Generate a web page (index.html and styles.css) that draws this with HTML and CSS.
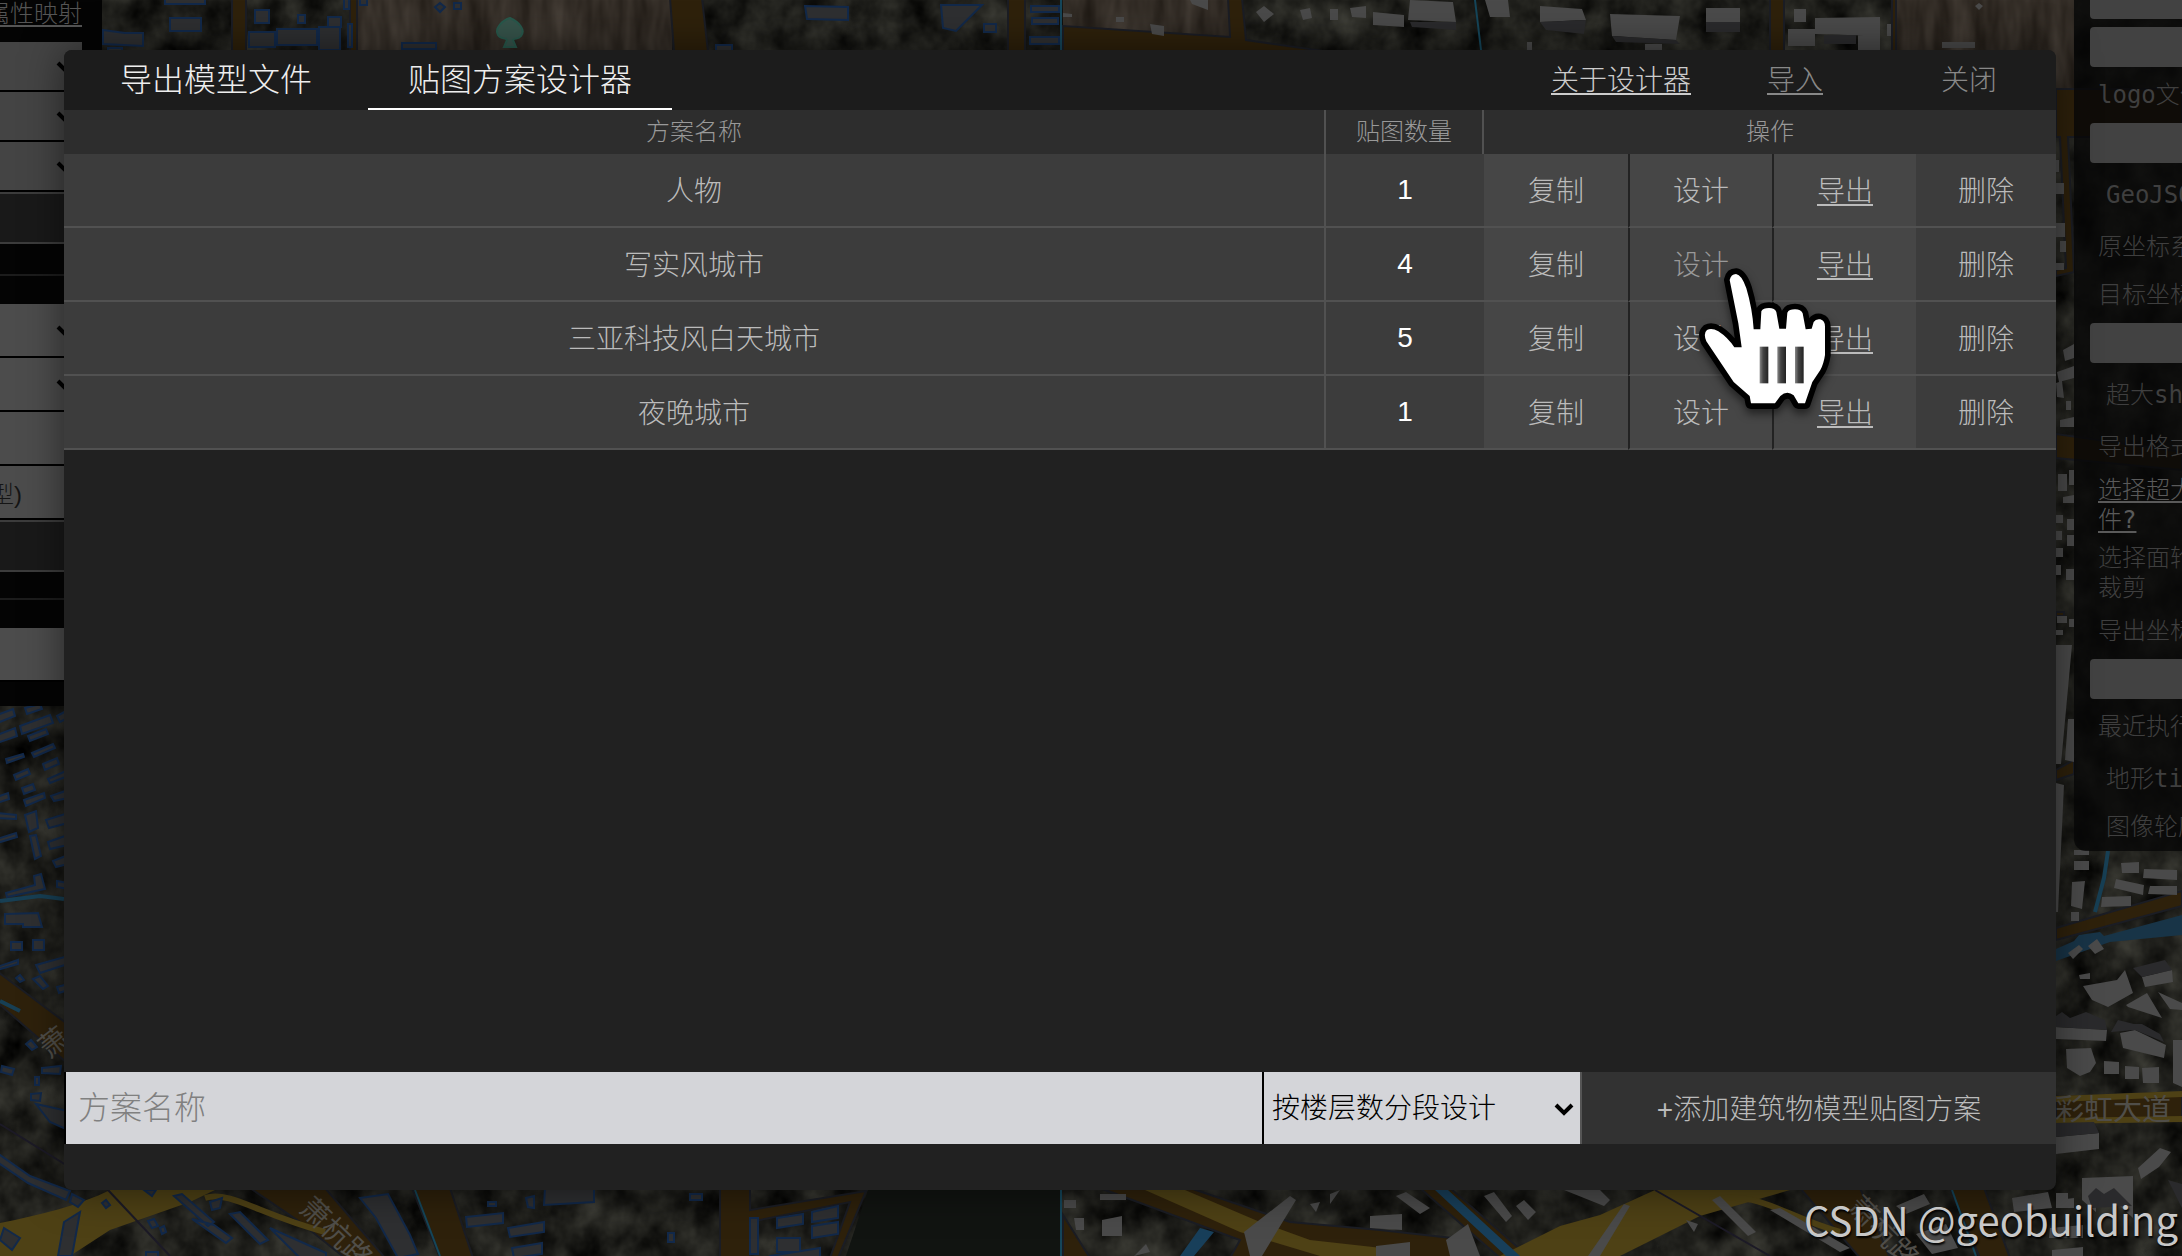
FILE: index.html
```html
<!DOCTYPE html>
<html lang="zh-CN">
<head>
    <meta charset="UTF-8">
    <meta name="viewport" content="width=device-width, initial-scale=1.0">
    <title>贴图方案设计器</title>
    <link rel="stylesheet" href="styles.css">
</head>
<body>

    <!-- Map behind everything -->
    <svg class="map" viewBox="0 0 2182 1256" preserveAspectRatio="xMidYMid slice" aria-hidden="true">
        <defs>
            <filter id="ground" x="0" y="0" width="100%" height="100%" color-interpolation-filters="sRGB">
                <feTurbulence type="fractalNoise" baseFrequency="0.03 0.026" numOctaves="4" seed="8"/>
                <feColorMatrix values="0.3 0 0 0 -0.03  0.3 0 0 0 -0.03  0.27 0 0 0 -0.03  0 0 0 0 1"/>
            </filter>
            <filter id="soil" x="0" y="0" width="100%" height="100%" color-interpolation-filters="sRGB">
                <feTurbulence type="fractalNoise" baseFrequency="0.06 0.015" numOctaves="3" seed="3"/>
                <feColorMatrix values="0.2 0 0 0 0.1  0.19 0 0 0 0.08  0.18 0 0 0 0.06  0 0 0 0 1"/>
            </filter>
        </defs>
        <rect width="2182" height="1256" fill="#1c1d19"/>
        <rect width="2182" height="1256" filter="url(#ground)"/>
        <rect x="358" width="314" height="50" filter="url(#soil)"/>
        <rect x="1063" width="170" height="50" filter="url(#soil)"/>
        <rect x="1897" width="177" height="89" filter="url(#soil)"/>
        <path d="M868 1190H1060V1256H846Z" fill="#111411"/>

        <!-- roads -->
        <g fill="#2e210b" stroke="#1b1d24" stroke-width="2">
            <path d="M232 -2H246V52H232ZM350 -2H357V52H350ZM670 -2H702L708 52H674ZM1008 -2H1025V52H1008Z"/>
            <path d="M1228 -2H1242L1246 40L1330 52H1063V26L1230 37Z"/>
            <path d="M1770 -2H1784V52H1770ZM1892 -2H1896V52H1892Z"/>
            <path d="M2056 89H2182V137H2090L2068 137L2074 272L2056 276V270L2066 268L2060 137H2056Z"/>
            <path d="M2056 434L2182 452V470L2056 458ZM2056 612H2064V616H2056ZM2056 770L2074 760V774L2056 780Z"/>
            <path d="M-2 972L66 1023V1062L-2 1003Z"/>
            <path d="M250 1188H325L385 1258H345L300 1222ZM412 1188H450L473 1258H440ZM720 1188H750V1210L866 1191L838 1258H830L850 1202L750 1222V1258H720Z"/>
            <path d="M1063 1215L1090 1258H1063ZM1100 1188H1190L1290 1222L1380 1230L1470 1240V1258H1230L1240 1240ZM1420 1188H1450L1530 1258H1500ZM1800 1188H1860L1890 1258H1860ZM1950 1188H1984L2010 1258H1980Z"/>
            <path d="M2056 928L2182 891V906L2056 940Z"/>
            <path d="M2056 1097L2182 1092V1121L2056 1123Z"/>
        </g>
        <g fill="#4e4115">
            <path d="M0 1223C40 1215 80 1205 110 1190H215L190 1202L110 1230L70 1256H0Z"/>
            <path d="M1145 1190H1185L1260 1222L1310 1240L1400 1250V1256H1320L1240 1232Z"/>
            <path d="M1655 1190H1790L1700 1216L1620 1256H1500L1560 1226L1600 1215Z"/>
        </g>
        <path d="M205 1198C230 1190 260 1215 325 1232M1710 1200C1760 1190 1780 1215 1840 1232M2056 1099L2182 1094M2056 1121L2182 1119" fill="none" stroke="#4e4115" stroke-width="6"/>
        <!-- water -->
        <path d="M2056 949L2074 941L2079 935L2100 932L2104 936L2182 915V935L2110 942L2056 961Z" fill="#183447"/>
        <path d="M1180 1256L1200 1228L1214 1232L1194 1256ZM1435 1190H1448L1520 1256H1506Z" fill="#183f5a"/>
        <path d="M0 901L40 896L64 899M0 1001L20 1011M2108 851L2104 878L2095 912" fill="none" stroke="#173f54" stroke-width="4"/>
        <path d="M1061 0V50M1061 1190V1256M415 1190L440 1256M1475 0L1481 50M1952 1190L1976 1256" fill="none" stroke="#15465a" stroke-width="2"/>
        <path d="M0 1124L66 1165M108 1190L170 1256M1655 1190L1770 1256" fill="none" stroke="#1c1a26" stroke-width="2"/>

        <!-- footprints with blue outlines -->
        <g fill="#2e2f31" stroke="#12294a" stroke-width="2">
            <path d="M165 -4H205V4H165ZM170 18H201V31H170ZM103 30L125 33H143V46L103 44ZM108 48H122V52H108ZM255 10H269V23H255ZM298 15H305V23H298ZM328 17H341V27H328ZM249 32H275V47H249ZM277 29H317V45H277ZM319 27H340V50H319ZM348 24H352V47H348ZM344 -2H349V9H344ZM360 -2H367V5H360ZM402 43H436V49H402ZM435 7L440 3L445 7L440 12ZM454 3H461V9H454Z"/>
            <path d="M805 6L848 7V20L807 19ZM716 45H732V52H716ZM941 5H982L956 31L943 28ZM984 24H996V32H984ZM1031 6H1059V12H1031ZM1032 18H1058V24H1032ZM1030 37H1059V44H1030Z"/>
            <path d="M-3 715L13 709L15 716L-3 723ZM25 708L40 704L42 709L27 714ZM-3 735L15 728L17 736L-3 743ZM20 726L50 715L53 723L22 734ZM28 736L46 729L48 734L30 741ZM57 716L68 710V718L60 722ZM6 759L23 754L24 757L7 763ZM32 753L53 744L55 748L34 757ZM43 764L57 758L59 764L45 770ZM48 779L68 770V776L50 783ZM14 775L28 769L30 774L16 780ZM22 788L33 784L35 790L24 794ZM24 800L44 793L45 798L26 806ZM51 796L68 790V798L54 801ZM-3 797L8 793L9 799L-3 803ZM-3 813L16 815V819L-3 818ZM-3 839L16 833L17 837L-3 843ZM25 815L36 811L38 828L29 832ZM46 820L68 813V823L49 828ZM48 842L68 835V845L50 849ZM30 836L36 835L41 856L35 859ZM53 861L68 855V864L56 867ZM6 893L35 885L34 876L41 874L45 889L7 897ZM57 881L68 883V889L57 887ZM5 914L38 913L42 927H23V924H5ZM11 942H22V950H11ZM33 940H44V950H33ZM36 965L68 956V964L40 973ZM-3 967L18 960V964L-3 970ZM16 978L20 975L24 980L20 982ZM33 979L40 976L48 986L43 989ZM57 987L68 984V990L59 993ZM26 1044L31 1040L37 1047L32 1050ZM2 1066L14 1069L12 1075L1 1072ZM42 1068L61 1066L60 1074L42 1073ZM35 1077H39V1085H35ZM31 1094L41 1093L40 1101L31 1100ZM36 1104L68 1111V1130L50 1122Z"/>
            <path d="M-3 1153L30 1176L70 1191L66 1200L28 1183L-3 1162ZM72 1194L84 1200L78 1207L70 1202ZM144 1190H156L152 1196ZM102 1203L106 1200L110 1205L106 1208ZM174 1196L182 1194L214 1222L208 1226ZM192 1219L214 1225L232 1238L226 1243ZM148 1221L154 1219L158 1226L152 1228ZM160 1228L164 1226L166 1232L162 1234ZM230 1214L240 1212L268 1240L260 1244ZM210 1202L222 1198L220 1208L212 1210ZM270 1228L326 1253V1258H300ZM4 1228L20 1238L12 1250L0 1240ZM64 1222L80 1212L72 1256H58ZM146 1252H158V1258H146ZM360 1198L388 1194L410 1235L418 1254L398 1258L376 1218ZM466 1217L503 1213V1223L467 1227ZM508 1228L544 1222V1232L510 1237ZM512 1248L542 1243V1254L514 1258ZM545 1188H594V1202L544 1205ZM526 1198L534 1196V1208L528 1207ZM488 1202H496V1206H488ZM690 1194H702V1200H690ZM668 1233H674V1242H668ZM750 1218H758V1254H750ZM777 1218L803 1214V1224L777 1228ZM777 1238H800V1252H777ZM812 1212L838 1206V1218L812 1222ZM812 1226L838 1222V1234L812 1238ZM770 1256L820 1248V1258H770Z"/>
        </g>

        <!-- extruded white buildings -->
        <g fill="#4a4a4a">
            <path d="M1300 10L1310 8L1312 18L1303 20ZM1256 12L1264 6L1274 14L1264 22ZM1330 9H1338V20H1330ZM1350 8L1366 6V18L1352 17ZM1373 12L1404 15V27L1373 25ZM1190 0H1208V10L1192 4ZM1150 24L1164 26V36L1152 34ZM1063 13L1072 14V17H1063ZM1116 17H1124V22H1116Z"/>
            <path d="M1410 0L1453 2L1456 22L1408 20ZM1485 0H1508L1510 17H1490ZM1540 6L1582 9L1586 20L1540 22ZM1610 14L1680 16L1676 40L1612 36ZM1706 8H1740V22H1706ZM1794 9H1806V22H1794ZM1788 29H1815V46H1788ZM1815 18L1880 17V36L1815 34ZM1858 22H1880V50H1858ZM1887 24H1891V36H1887ZM1942 42H1975V48H1942ZM1645 44H1662V50H1645ZM1527 42H1532V50H1527ZM1975 6L1979 3L1983 6L1979 10Z"/>
            <path d="M2056 160H2059V172H2056ZM2056 183H2064V194H2056ZM2056 223H2065V237H2056ZM2060 241H2066V252H2060ZM2056 263H2064V270H2056ZM2063 350L2074 344V358L2065 361ZM2057 372L2074 366V378L2059 382ZM2056 383L2062 381L2064 398L2057 397ZM2066 401H2071V410H2066ZM2060 420L2074 417V427H2060ZM2058 474H2067V491H2058ZM2069 470H2074V485H2069ZM2063 497L2074 495V503H2063ZM2056 515H2063V523H2056ZM2067 519H2074V530H2067ZM2056 531H2062V540H2056ZM2067 535H2074V546H2067ZM2056 548H2063V557H2056ZM2056 565H2061V575H2056ZM2066 569H2074V580H2066ZM2057 616H2067V623H2057ZM2069 619H2074V627H2069ZM2056 630H2063V635H2056ZM2056 645H2072L2061 764H2056ZM2068 719H2074V762L2065 760ZM2056 783L2064 785L2058 912H2056Z"/>
            <path d="M2074 850H2089V855H2074ZM2074 861H2089V870H2074ZM2072 882L2085 881L2082 909L2071 906ZM2071 912H2079V921H2071ZM2121 863L2139 862V873H2122ZM2144 869L2177 870V880L2143 878ZM2116 879L2144 885L2143 895L2114 888ZM2150 886H2177V895L2148 894ZM2102 897L2131 896V906L2101 907ZM2068 953L2079 945L2083 949L2073 959ZM2088 946L2097 939L2104 949L2095 954ZM2079 975L2090 973V979H2080ZM2083 986L2117 980L2125 970L2133 993L2108 1007L2092 1000ZM2142 977L2172 970L2173 982L2145 987ZM2126 1005L2147 993L2162 1018L2128 1007ZM2158 992L2182 1003V1010L2170 1009ZM2056 1027L2107 1030L2106 1041L2056 1039ZM2120 1033L2135 1030L2166 1045L2164 1058L2123 1048ZM2066 1049L2091 1048L2096 1063L2090 1072L2080 1076L2067 1068ZM2104 1061L2119 1062V1074H2104ZM2125 1066L2139 1067V1079H2125ZM2142 1068L2159 1067V1083H2143ZM2173 1040H2182V1087L2173 1083ZM2056 1137L2099 1133V1149L2056 1154ZM2138 1168L2160 1148L2171 1152L2159 1167L2141 1179ZM2082 1178L2133 1176V1218L2120 1206H2096V1212L2082 1200ZM2056 1193H2068V1208H2056ZM2066 1199L2074 1198V1208H2067ZM2050 1228L2083 1225V1238L2049 1238ZM2052 1250L2083 1247V1256H2052Z"/>
            <path d="M1100 1194H1126V1200H1100ZM1102 1220L1122 1216V1236H1102ZM1134 1256L1146 1244L1150 1252ZM1244 1232L1290 1196L1296 1200L1262 1256H1250ZM1330 1194L1340 1190L1330 1204ZM1310 1204L1320 1202L1316 1212ZM1396 1196L1406 1192L1430 1208L1420 1214ZM1370 1216L1402 1214V1230L1370 1228ZM1376 1246L1410 1242V1256H1376ZM1446 1240L1468 1224L1480 1256H1450ZM1484 1196L1494 1192L1512 1216L1506 1222ZM1516 1206L1524 1200L1536 1212L1528 1220ZM1588 1256L1624 1204L1630 1206L1600 1256ZM1564 1190H1600L1610 1200L1604 1206ZM1686 1220L1698 1224L1694 1232ZM1712 1200L1720 1196L1756 1232L1748 1236ZM1770 1210L1780 1208L1850 1248L1840 1252ZM1064 1200H1076V1208H1064ZM1074 1218H1084V1230H1076ZM1916 1234L1946 1224L1958 1248L1932 1254ZM1896 1206L1924 1194L1930 1204L1906 1214ZM2012 1198L2048 1192L2052 1208L2014 1212Z"/>
        </g>
        <path d="M1540 22L1586 20L1584 34L1546 30ZM1612 36L1676 40L1680 44L1616 42ZM1706 22H1740V32H1706ZM1410 22L1456 22V30L1412 27ZM1824 35H1856V44H1824ZM2133 968L2165 960L2172 970L2142 977ZM2056 1016L2062 1012L2070 1018L2086 1012L2105 1020L2107 1030L2056 1027ZM2118 1020L2134 1024L2142 1024L2160 1034L2164 1042L2135 1030L2111 1032ZM2056 1123L2094 1122L2099 1133L2056 1137ZM2088 1196L2096 1188L2104 1194L2114 1188L2132 1206L2092 1208ZM2168 1180L2182 1184V1208Z" fill="#2a2a2c"/>
        <!-- tree marker -->
        <path d="M510 18C519 22 526 30 521 36C518 40 515 37 513 40L516 47H504L507 40C505 37 501 40 498 35C494 28 503 20 510 18Z" fill="#36544b" stroke="#28594c" stroke-width="2"/>

        <g class="map-label">
            <text x="40" y="1052" transform="rotate(-38 55 1043)">萧</text>
            <text x="298" y="1210" transform="rotate(44 298 1210)">萧杭路</text>
            <text x="1846" y="1208" transform="rotate(46 1846 1208)">萧杭路</text>
            <text x="2055" y="1120">彩虹大道</text>
        </g>
    </svg>

    <!-- Left tool panel -->
    <div class="panel-left">
        <a class="panel-link" href="#">属性映射</a>
        <div class="field"><select aria-label="字段一"><option></option></select><svg class="chevron" viewBox="0 0 20 14"><path d="M2 3L10 11L18 3"/></svg></div>
        <div class="field"><select aria-label="字段二"><option></option></select><svg class="chevron" viewBox="0 0 20 14"><path d="M2 3L10 11L18 3"/></svg></div>
        <div class="field"><select aria-label="字段三"><option></option></select><svg class="chevron" viewBox="0 0 20 14"><path d="M2 3L10 11L18 3"/></svg></div>
        <button class="panel-button" aria-label="执行"></button>
        <div class="divider"></div>
        <div class="field tall"><select aria-label="字段四"><option></option></select><svg class="chevron" viewBox="0 0 20 14"><path d="M2 3L10 11L18 3"/></svg></div>
        <div class="field tall"><select aria-label="字段五"><option></option></select><svg class="chevron" viewBox="0 0 20 14"><path d="M2 3L10 11L18 3"/></svg></div>
        <div class="field tall"><input type="text" aria-label="数值"></div>
        <div class="field tall"><input type="text" aria-label="类型" value="型)"></div>
        <button class="panel-button" aria-label="导出"></button>
        <div class="divider short"></div>
        <div class="field tall"><input type="text" aria-label="名称"></div>
    </div>

    <!-- Right tool panel -->
    <div class="panel-right">
        <input class="box first" type="text" aria-label="标题">
        <input class="box" type="text" aria-label="副标题">
        <label class="line" for="logo">logo文件</label>
        <input class="box" id="logo" type="text">
        <div class="line indent">GeoJSON</div>
        <div class="line">原坐标系</div>
        <label class="line" for="target">目标坐标系</label>
        <input class="box" id="target" type="text">
        <div class="line indent">超大shp</div>
        <div class="line">导出格式</div>
        <a class="para" href="#">选择超大文件?</a>
        <div class="para">选择面轮廓裁剪</div>
        <label class="line" for="coord">导出坐标</label>
        <input class="box" id="coord" type="text">
        <div class="line">最近执行</div>
        <div class="line indent">地形tif</div>
        <div class="line indent">图像轮廓</div>
    </div>

    <!-- Designer dialog -->
    <div class="overlay">
        <div class="dialog">
            <div class="dialog-header">
                <button class="tab">导出模型文件</button>
                <button class="tab active">贴图方案设计器</button>
                <div class="header-actions">
                    <a class="about" href="#">关于设计器</a>
                    <a href="#">导入</a>
                    <button class="close">关闭</button>
                </div>
            </div>

            <table class="plans">
                <colgroup>
                    <col>
                    <col class="col-count">
                    <col class="col-action">
                    <col class="col-action">
                    <col class="col-action">
                    <col class="col-delete">
                </colgroup>
                <thead>
                    <tr>
                        <th class="name">方案名称</th>
                        <th class="count">贴图数量</th>
                        <th colspan="4">操作</th>
                    </tr>
                </thead>
                <tbody>
                    <tr>
                        <td class="name">人物</td>
                        <td class="count">1</td>
                        <td class="action"><button>复制</button></td>
                        <td class="action"><button>设计</button></td>
                        <td class="action"><a href="#">导出</a></td>
                        <td><button>删除</button></td>
                    </tr>
                    <tr>
                        <td class="name">写实风城市</td>
                        <td class="count">4</td>
                        <td class="action"><button>复制</button></td>
                        <td class="action hover"><button>设计</button></td>
                        <td class="action"><a href="#">导出</a></td>
                        <td><button>删除</button></td>
                    </tr>
                    <tr>
                        <td class="name">三亚科技风白天城市</td>
                        <td class="count">5</td>
                        <td class="action"><button>复制</button></td>
                        <td class="action"><button>设计</button></td>
                        <td class="action"><a href="#">导出</a></td>
                        <td><button>删除</button></td>
                    </tr>
                    <tr>
                        <td class="name">夜晚城市</td>
                        <td class="count">1</td>
                        <td class="action"><button>复制</button></td>
                        <td class="action"><button>设计</button></td>
                        <td class="action"><a href="#">导出</a></td>
                        <td><button>删除</button></td>
                    </tr>
                </tbody>
            </table>

            <form class="add-bar">
                <input type="text" placeholder="方案名称" aria-label="方案名称">
                <div class="mode">
                    <select aria-label="设计方式"><option>按楼层数分段设计</option></select>
                    <svg class="chevron" viewBox="0 0 20 14"><path d="M2 3L10 11L18 3"/></svg>
                </div>
                <button type="button">+添加建筑物模型贴图方案</button>
            </form>
        </div>
    </div>

    <!-- Mouse pointer -->
    <svg class="pointer" viewBox="140 75 411 441" aria-hidden="true">
        <defs>
            <linearGradient id="groove">
                <stop offset="0" stop-color="#888"/>
                <stop offset="0.4" stop-color="#444"/>
                <stop offset="1" stop-color="#222"/>
            </linearGradient>
        </defs>
        <path class="hand" d="M238 120Q242 102 257 102Q274 104 288 145Q306 205 310 268L330 268L333 214Q338 204 356 204Q374 204 378 216L387 266L407 266L411 218Q416 208 434 208Q452 208 457 220L466 268L484 266L490 246Q496 236 510 238Q524 242 524 260L524 345Q520 372 510 390L486 426L464 490L444 490L430 466Q410 450 390 468L374 490L302 490L298 468L250 426L168 304Q158 280 170 270Q184 262 204 274Q232 292 252 322L274 322L264 250Z"/>
        <rect x="328" y="320" width="26" height="110" fill="url(#groove)"/>
        <rect x="381" y="320" width="26" height="110" fill="url(#groove)"/>
        <rect x="434" y="320" width="26" height="110" fill="url(#groove)"/>
    </svg>

    <div class="watermark">CSDN @geobuilding</div>

</body>
</html>
```
FILE: styles.css
```css
* {
    box-sizing: border-box;
}

body {
    margin: 0;
    height: 100vh;
    position: relative;
    overflow: hidden;
    background-color: #1c1d19;
    font-family: "Liberation Sans", "Noto Sans CJK SC", sans-serif;
    font-weight: 300;
    color: #bbb;
}

button, input, select {
    font: inherit;
    color: inherit;
    margin: 0;
    padding: 0;
    border: 0;
    border-radius: 0;
    background: none;
}

a {
    color: inherit;
    text-underline-offset: 3px;
}

/* Map */
.map {
    position: absolute;
    width: 100%;
    height: 100%;
}

.map-label {
    font-size: 29px;
    font-weight: 400;
    fill: #504e49;
}

/* Left panel */
.panel-left {
    position: absolute;
    top: 0;
    left: 0;
    width: 102px;
    padding-right: 20px;
    padding-bottom: 24px;
    overflow: hidden;
    background-color: #040404;
}

.panel-link {
    display: flex;
    justify-content: flex-end;
    height: 42px;
    line-height: 28px;
    font-size: 24px;
    color: #555;
    white-space: nowrap;
}

.field {
    position: relative;
    height: 50px;
    border-bottom: 2px solid #000;
    background-color: #444;
}

.field.tall {
    height: 54px;
    background-color: #4c4c4c;
}

.field select {
    width: 100%;
    height: 100%;
    appearance: none;
}

/* Wider than the panel, the value sits at the right end */
.field input {
    width: 182px;
    height: 100%;
    margin-left: -100px;
    padding-right: 60px;
    text-align: right;
    font-size: 24px;
    color: #151515;
}

.chevron {
    position: absolute;
    right: 6px;
    top: 50%;
    width: 20px;
    height: 14px;
    margin-top: -6px;
    pointer-events: none;
}

.chevron path {
    fill: none;
    stroke: #000;
    stroke-width: 4;
}

.panel-button {
    display: block;
    width: 100%;
    height: 52px;
    border-top: 2px solid #3c3c3c;
    border-bottom: 2px solid #3c3c3c;
    background-color: #191919;
}

.divider {
    height: 32px;
    margin-bottom: 28px;
    border-bottom: 2px solid #1c1c1c;
}

.divider.short {
    height: 28px;
}

/* Right panel */
.panel-right {
    position: absolute;
    top: 0;
    right: 0;
    display: flex;
    flex-direction: column;
    width: 108px;
    padding-left: 16px;
    overflow: hidden;
    border-radius: 0 0 0 12px;
    background-color: rgba(8, 8, 8, 0.8);
    font-family: "DejaVu Sans Mono", "Noto Sans CJK SC", monospace;
    font-size: 24px;
    color: #3f3f3f;
    white-space: nowrap;
}

.box {
    width: 200px;
    height: 40px;
    margin: 4px 0;
    border-radius: 4px;
    background-color: #424242;
}

.box.first {
    height: 19px;
    margin-top: 0;
    border-radius: 0 0 4px 4px;
}

.line {
    height: 48px;
    line-height: 48px;
    padding-left: 8px;
}

.line.indent {
    margin-top: 4px;
    margin-bottom: 4px;
    padding-left: 16px;
}

.line.indent:last-child {
    margin: -4px 0 0;
}

.para {
    width: 140px;
    margin: 4px 0;
    padding: 0 8px;
    line-height: 30px;
    white-space: normal;
}

a.para {
    color: #5a5a5a;
}

/* Dialog */
.overlay {
    position: absolute;
    top: 0;
    right: 0;
    bottom: 0;
    left: 0;
    display: flex;
    padding: 50px 126px 66px 64px;
}

.dialog {
    flex: 1;
    display: flex;
    flex-direction: column;
    overflow: hidden;
    border-radius: 8px;
    background-color: #212121;
    box-shadow: 0 0 40px rgba(0, 0, 0, 0.5);
}

.dialog-header {
    display: flex;
    height: 60px;
    background-color: #1c1c1c;
}

.tab {
    width: 304px;
    padding-bottom: 4px;
    font-size: 32px;
    color: #eee;
    border-bottom: 2px solid transparent;
}

.tab.active {
    border-bottom-color: #fff;
}

.header-actions {
    display: flex;
    margin-left: auto;
    font-size: 28px;
    line-height: 62px;
    text-align: center;
    color: #888;
}

.header-actions > * {
    width: 174px;
}

.header-actions .about {
    color: #ccc;
}

/* Plan table */
.plans {
    width: 100%;
    table-layout: fixed;
    border-collapse: separate;
    border-spacing: 0;
    text-align: center;
    font-size: 28px;
}

.col-count {
    width: 158px;
}

.col-action {
    width: 144px;
}

.col-delete {
    width: 140px;
}

.plans th {
    height: 44px;
    padding: 0;
    background-color: #2d2d2d;
    font-size: 24px;
    line-height: 42px;
    font-weight: 300;
    color: #999;
}

.plans td {
    height: 74px;
    padding: 0 0 2px;
    border-bottom: 2px solid #515151;
    background-color: #3c3c3c;
}

.plans .name, .plans th.count {
    border-right: 2px solid #515151;
}

.plans td.count {
    padding: 0;
    color: #fff;
}

.plans td.action {
    background-color: #464646;
}

.plans td.action + .action {
    border-left: 2px solid #222;
}

.plans td.action.hover {
    background-color: #434343;
    color: #999;
}

.plans td button {
    width: 100%;
    height: 100%;
}

/* Add form */
.add-bar {
    display: flex;
    height: 72px;
    margin-top: auto;
    margin-bottom: 46px;
    border-left: 2px solid #000;
    background-color: #323232;
}

.add-bar input {
    flex: 1;
    padding: 0 12px;
    font-size: 32px;
    background-color: #d4d5d9;
    color: #222;
}

.add-bar input::placeholder {
    color: #808080;
    opacity: 1;
}

.mode {
    position: relative;
    width: 320px;
    border-left: 2px solid #000;
    border-right: 2px solid #555;
    background-color: #d4d5d9;
}

.mode select {
    width: 100%;
    height: 100%;
    padding-left: 8px;
    appearance: none;
    font-size: 28px;
    color: #000;
}

.add-bar button {
    width: 474px;
    padding-bottom: 2px;
    font-size: 28px;
}

/* Pointer and watermark */
.pointer {
    position: absolute;
    left: 1697px;
    top: 265px;
    width: 137px;
    height: 147px;
    overflow: visible;
    filter: drop-shadow(0 5px 4px rgba(0, 0, 0, 0.5));
}

.hand {
    fill: #fff;
    stroke: #000;
    stroke-width: 34;
    stroke-linejoin: round;
    paint-order: stroke;
}

.watermark {
    position: absolute;
    right: 4px;
    bottom: 8px;
    font-family: "Noto Sans CJK SC", sans-serif;
    font-weight: 400;
    font-size: 40px;
    color: #c8c8c8;
    text-shadow: 1px 2px 2px #000;
}
```
